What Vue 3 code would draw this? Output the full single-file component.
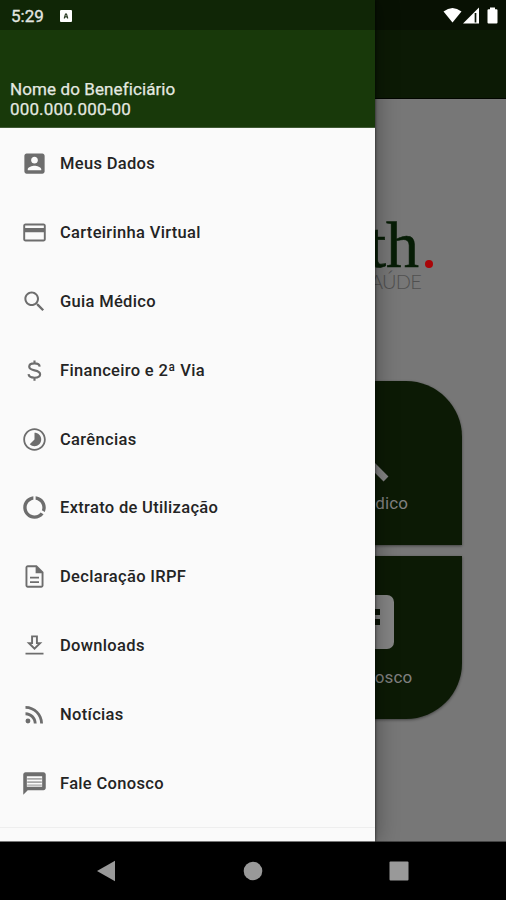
<script setup>
const items = [
  { label: 'Meus Dados', d: 'M3 5v14c0 1.1.89 2 2 2h14c1.1 0 2-.9 2-2V5c0-1.1-.9-2-2-2H5c-1.11 0-2 .9-2 2zm12 4c0 1.66-1.34 3-3 3s-3-1.34-3-3 1.34-3 3-3 3 1.34 3 3zm-9 8c0-2 4-3.1 6-3.1s6 1.1 6 3.1v1H6v-1z' },
  { label: 'Carteirinha Virtual', d: 'M20 4H4c-1.11 0-1.99.89-1.99 2L2 18c0 1.11.89 2 2 2h16c1.11 0 2-.89 2-2V6c0-1.11-.89-2-2-2zm.3 14.300H3.700V11.700h16.600v6.600zm0-10.300H3.700V5.700h16.600v2.300z' },
  { label: 'Guia Médico', d: 'M15.5 14h-.79l-.28-.27C15.41 12.59 16 11.11 16 9.5 16 5.91 13.09 3 9.5 3S3 5.91 3 9.5 5.91 16 9.5 16c1.61 0 3.09-.59 4.23-1.57l.27.28v.79l5 4.99L20.49 19l-4.99-5zm-6 .2C6.900 14.200 4.800 12.100 4.800 9.500S6.900 4.800 9.500 4.800 14.200 6.900 14.200 9.500 12.100 14.200 9.500 14.200z' },
  { label: 'Financeiro e 2ª Via', stroke: true, d: 'M16.600 8.600C16.400 6.700 14.400 5.700 12 5.700S7.300 6.700 7.300 8.700c0 4.300 9.700 2.100 9.700 6.700 0 2-2.200 3-5 3s-5.100-1-5.300-3.100M12 3v2.700m0 12.700v2.700' },
  { label: 'Carências', d: 'M16.24 7.76C15.07 6.59 13.54 6 12 6v6l-4.24 4.24c2.34 2.34 6.14 2.34 8.49 0 2.34-2.34 2.34-6.14-.01-8.48zM12 2C6.48 2 2 6.48 2 12s4.48 10 10 10 10-4.48 10-10S17.52 2 12 2zm0 18.400c-4.640 0-8.400-3.760-8.400-8.400s3.760-8.400 8.400-8.400 8.400 3.760 8.400 8.400-3.760 8.400-8.400 8.400z' },
  { label: 'Extrato de Utilização', d: 'M13 2.05v3.03c3.39.49 6 3.39 6 6.92 0 .9-.18 1.75-.48 2.54l2.6 1.53c.56-1.24.88-2.62.88-4.07 0-5.18-3.95-9.45-9-9.95zM12 19c-3.87 0-7-3.13-7-7 0-3.53 2.61-6.43 6-6.92V2.05c-5.06.5-9 4.76-9 9.95 0 5.52 4.47 10 9.99 10 3.31 0 6.24-1.61 8.06-4.09l-2.6-1.53C16.17 17.98 14.21 19 12 19z' },
  { label: 'Declaração IRPF', d: 'M8 16.200h8v1.600H8zm0-4h8v1.600H8zM14 2H6c-1.1 0-2 .9-2 2v16c0 1.1.89 2 1.99 2H18c1.1 0 2-.9 2-2V8l-6-6zm4.300 18.300H5.700V3.700h7.300v5.300h5.300v11.300z' },
  { label: 'Downloads', d: 'M19 9h-4V3H9v6H5l7 7 7-7zm-8.300 1.700v-6h2.600v6h1.700L12 13.600l-2.900-2.900H10.700zM4 18.400h16v1.700H4z' },
  { label: 'Notícias', d: 'M6.18 15.64a2.18 2.18 0 1 1 0 4.36 2.18 2.18 0 0 1 0-4.36zM4 4.44v2.5c7.200 0 13.060 5.860 13.060 13.060h2.500c0-8.590-6.970-15.560-15.560-15.560zm0 5.66v2.5c4.080 0 7.400 3.320 7.400 7.400h2.500c0-5.470-4.430-9.900-9.900-9.900z' },
  { label: 'Fale Conosco', d: 'M4 2c-1.1 0-2 .9-2 2v18l4-4h14c1.1 0 2-.9 2-2V4c0-1.1-.9-2-2-2H4zm1.200 3.500h13.600v9.300H5.200V5.500z', hatch: true },
]
</script>

<template>
  <div class="screen">
    <main class="home">
      <header class="appbar"></header>
      <div class="logo">
        <div class="brand">th<i class="dot"></i></div>
        <div class="tag">SAÚDE</div>
      </div>
      <div class="cards">
        <section class="card top">
          <svg class="search" viewBox="0 0 24 24"><path :d="items[2].d" /></svg>
          <span>Guia Médico</span>
        </section>
        <section class="card bottom">
          <svg class="contact" viewBox="0 0 68 54"><rect width="68" height="54" rx="7" /><path class="cut" d="M36 14h18v6H36zm0 10h18v6H36z" /></svg>
          <span>Fale Conosco</span>
        </section>
      </div>
    </main>

    <aside class="drawer">
      <header class="profile">
        <div>Nome do Beneficiário</div>
        <div class="cpf">000.000.000-00</div>
      </header>
      <nav class="menu">
        <a v-for="item in items" :key="item.label" class="item">
          <svg viewBox="0 0 24 24">
            <path :d="item.d" :class="{ line: item.stroke }" />
            <path v-if="item.hatch" class="hatch" d="M5.500 7h13v1.600h-13zm0 2.900h13v1.600h-13zm0 2.900h13v1.200h-13z" />
          </svg>
          <span>{{ item.label }}</span>
        </a>
      </nav>
    </aside>

    <div class="status">
      <span class="time">5:29</span>
      <svg class="app" viewBox="0 0 12 12"><rect width="12" height="12" rx="1" fill="#fff" /><path d="M4.200 8.500L5.500 4h1l1.300 4.500M5 6.900h2" fill="none" stroke="#263820" stroke-width="1.100" /></svg>
      <svg class="signals" viewBox="0 0 56 18">
        <path d="M.5 4.5Q9.5-2.5 18.500 4.500L9.500 15.500z" />
        <path d="M36 .5V16.500H20z" />
        <path d="M32.500 6v9.500" stroke="#0a1506" stroke-width="1.700" />
        <path d="M47 .5h5v1.700h1.500q1 0 1 1V15.500q0 1-1 1h-8q-1 0-1-1V3.200q0-1 1-1H47z" />
      </svg>
    </div>

    <footer class="navbar">
      <svg viewBox="0 0 20 22"><path d="M19 .8v20.400L1 11z" /></svg>
      <svg viewBox="0 0 20 22"><circle cx="10" cy="11" r="9.300" /></svg>
      <svg viewBox="0 0 20 22"><rect x=".5" y="1.500" width="19" height="19" rx="1" /></svg>
    </footer>
  </div>
</template>

<style>
body { margin: 0; }
</style>

<style scoped>
.screen {
  position: relative;
  width: 506px;
  height: 900px;
  overflow: hidden;
  display: flex;
  flex-direction: column;
  background: #000;
  font-family: Roboto, "Liberation Sans", sans-serif;
}
svg { display: block; flex: none; }
.home {
  flex: none;
  height: 842px;
  box-sizing: border-box;
  background: #777;
  display: flex;
  flex-direction: column;
  border-bottom: 1px solid #444;
}
.appbar {
  height: 99px;
  box-sizing: border-box;
  flex: none;
  background: #0c1a05;
  border-bottom: 1px solid #020500;
}
.logo {
  height: 282px;
  box-sizing: border-box;
  padding: 121px 73px 0 0;
  display: flex;
  flex-direction: column;
  align-items: flex-end;
}
.brand {
  display: flex;
  align-items: flex-end;
  font-family: "Liberation Serif", serif;
  font-size: 66px;
  line-height: 50px;
  color: #071d06;
  -webkit-text-stroke: .6px #071d06;
}
.dot {
  width: 8px;
  height: 8px;
  margin: 0 0 2px 6px;
  border-radius: 50%;
  background: #a90508;
}
.tag {
  margin: 1px 12px 0 0;
  font-family: Lato, sans-serif;
  font-weight: 300;
  font-size: 20px;
  line-height: 20px;
  letter-spacing: -.8px;
  color: #505050;
}
.cards {
  display: flex;
  flex-direction: column;
  align-items: flex-end;
  gap: 11px;
  padding-right: 44px;
}
.card {
  width: 204px;
  box-sizing: border-box;
  background: #0c1a05;
  box-shadow: 0 1px 3px rgba(0, 0, 0, .45);
  display: flex;
  flex-direction: column;
  align-items: center;
  color: #808080;
  fill: #858585;
  font-size: 17px;
  line-height: 20px;
  letter-spacing: .15px;
}
.card.top { height: 164px; padding-top: 33px; border-top-right-radius: 56px; }
.card.bottom { height: 163px; padding-top: 39px; border-bottom-right-radius: 56px; }
.search { width: 79px; height: 79px; }
.contact { width: 68px; height: 54px; margin-bottom: 18px; }
.cut { fill: #0a1406; }
.drawer {
  position: absolute;
  left: 0;
  top: 0;
  width: 375px;
  height: 842px;
  box-sizing: border-box;
  background: #fafafa;
  border-bottom: 1px solid #777;
  box-shadow: 0 0 3px rgba(0, 0, 0, .75), 3px 0 20px rgba(0, 0, 0, .3);
  clip-path: inset(0 -40px 0 0);
}
.profile {
  height: 128px;
  box-sizing: border-box;
  padding: 80px 0 0 10px;
  background: #18390a;
  border-bottom: 1px solid #405a35;
  color: #e4e9e1;
  font-size: 17px;
  line-height: 19.5px;
  letter-spacing: .1px;
  -webkit-text-stroke: .25px #e4e9e1;
}
.cpf { letter-spacing: .15px; }
.menu {
  display: flex;
  flex-direction: column;
  padding: 1px 0 9px;
  border-bottom: 1px solid #eee;
}
.item {
  height: 68.9px;
  display: flex;
  align-items: center;
  gap: 12px;
  padding-left: 21px;
  font-size: 16.5px;
  font-weight: 500;
  letter-spacing: .32px;
  color: #242424;
}
.item svg { width: 27px; height: 27px; fill: #6d6d6d; }
.item .line { fill: none; stroke: #6d6d6d; stroke-width: 1.9; }
.item .hatch { fill: #a8a8a8; }
.status {
  position: absolute;
  left: 0;
  top: 0;
  width: 506px;
  height: 30px;
  box-sizing: border-box;
  display: flex;
  align-items: center;
  padding: 2px 7px 0 11px;
  background: rgba(0, 0, 0, .32);
  color: #e4e7e2;
}
.time { width: 49px; font-size: 17px; -webkit-text-stroke: .3px #e4e7e2; }
.app { width: 12px; height: 12px; }
.signals { width: 56px; height: 18px; margin-left: auto; fill: #fff; }
.navbar {
  height: 58px;
  display: flex;
  align-items: center;
  justify-content: space-between;
  box-sizing: border-box;
  padding: 0 97px 0 96px;
  fill: #999;
}
.navbar svg { width: 20px; height: 22px; }
</style>
